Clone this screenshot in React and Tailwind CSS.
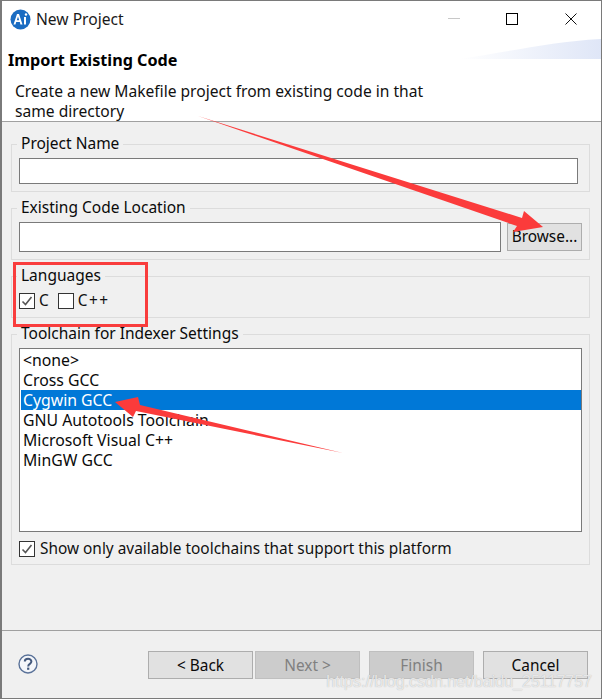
function Group({ label, className, children }) {
  return (
    <fieldset className={`border border-[#dcdcdc] mx-0 ${className}`}>
      <legend className="-ml-[2px] px-[4px] h-[20px] leading-[18px] text-[15.5px] text-[#0a0a0a]">{label}</legend>
      {children}
    </fieldset>
  );
}

function Check({ checked }) {
  return (
    <span className="w-[16px] h-[16px] shrink-0 border border-[#333] bg-white flex items-center justify-center">
      {checked && (
        <svg width="14" height="14" viewBox="0 0 14 14">
          <path d="M2.5 7.5 L5.5 10.5 L11.5 3" fill="none" stroke="#555" strokeWidth="1.6" />
        </svg>
      )}
    </span>
  );
}

function Btn({ children, disabled, className = '' }) {
  return (
    <button
      className={`h-[28px] w-[105px] border pt-px text-[15.4px] leading-[24px] ${
        disabled ? 'bg-[#cccccc] border-[#bfbfbf] text-[#808080]' : 'bg-[#e1e1e1] border-[#adadad] text-[#0a0a0a]'
      } ${className}`}
    >
      {children}
    </button>
  );
}

const items = ['<none>', 'Cross GCC', 'Cygwin GCC', 'GNU Autotools Toolchain', 'Microsoft Visual C++', 'MinGW GCC'];

export default function App() {
  return (
    <div className="relative w-[602px] h-[699px] overflow-hidden flex flex-col bg-[#f0f0f0] border-t border-b border-r border-l-2 border-[#7a7a7a] font-['Noto_Sans','Open_Sans',sans-serif]">
      {/* header */}
      <div className="relative h-[120px] bg-white border-b border-[#a0a0a0] box-content shrink-0">
        <svg className="absolute right-0 top-[37px]" width="142" height="21" viewBox="0 0 142 21">
          <defs>
            <linearGradient id="sw" x1="0" x2="1" y1="0" y2="0">
              <stop offset="0" stopColor="#ffffff" />
              <stop offset="1" stopColor="#dfe6f7" />
            </linearGradient>
          </defs>
          <path d="M0 21 C50 14 90 4 142 1 L142 21 Z" fill="url(#sw)" />
        </svg>
        <div className="relative flex items-center h-[37px] pl-[8px] pr-[24px]">
          <svg width="21" height="21" viewBox="0 0 21 21" className="shrink-0">
            <circle cx="10.5" cy="10.5" r="10" fill="#1a6cc2" />
            <path d="M3.5 15.5 L7 5 L9 5 L12.5 15.5 L10.4 15.5 L9.8 13 L6.2 13 L5.5 15.5 Z M6.8 11.2 L9.2 11.2 L8 7.4 Z" fill="#ffffff" fillRule="evenodd" />
            <rect x="14" y="8" width="2" height="7.5" fill="#ffffff" />
            <circle cx="16" cy="5.5" r="1.2" fill="#ffffff" />
          </svg>
          <span className="ml-[5px] text-[15.6px] text-[#1a1a1a]">New Project</span>
          <div className="ml-auto mb-[2px] flex items-center">
            <span className="w-[12px] h-px bg-[#c8c8c8]" />
            <span className="ml-[46px] w-[12px] h-[12px] border border-black" />
            <svg className="ml-[47px]" width="12" height="12" viewBox="0 0 12 12">
              <path d="M0.5 0.5 L11.5 11.5 M11.5 0.5 L0.5 11.5" stroke="#111" strokeWidth="1" />
            </svg>
          </div>
        </div>
        <h1 className="relative mt-[11px] ml-[6px] text-[16.2px] font-bold leading-[22px] text-black">Import Existing Code</h1>
        <p className="relative mt-[10px] ml-[13px] w-[430px] text-[15.6px] leading-[20px] text-[#111]">
          Create a new Makefile project from existing code in that same directory
        </p>
      </div>

      {/* groups */}
      <div className="flex-1 pl-[9px] pr-[11px] pt-[12px] flex flex-col">
        <Group label="Project Name" className="h-[58px] pl-[7px] pr-[11px] pt-[4px]">
          <div className="h-[26px] border border-[#7a7a7a] bg-white" />
        </Group>
        <Group label="Existing Code Location" className="mt-[6px] h-[62px] pl-[7px] pr-[7px] pt-[4px]">
          <div className="flex gap-[6px]">
            <div className="flex-1 h-[30px] border border-[#7a7a7a] bg-white" />
            <button className="w-[75px] h-[28px] mt-px border border-[#adadad] bg-[#e1e1e1] text-[15.4px] text-[#0a0a0a]">Browse...</button>
          </div>
        </Group>
        <Group label="Languages" className="mt-[6px] h-[52px] pl-[7px] pt-[6px]">
          <div className="flex items-center text-[15.4px] leading-[18px] text-[#111]">
            <Check checked />
            <span className="ml-[4px]">C</span>
            <span className="ml-[9px]"><Check /></span>
            <span className="ml-[4px] tracking-[1.5px]">C++</span>
          </div>
        </Group>
        <Group label="Toolchain for Indexer Settings" className="mt-[6px] h-[241px] pl-[7px] pr-[7px] pt-[4px]">
          <div className="h-[184px] border border-[#7a7a7a] bg-white pl-px pt-px">
            {items.map((t, i) => (
              <div
                key={t}
                className={`h-[20px] leading-[20px] text-[15.8px] pl-[2px] ${i === 2 ? 'bg-[#0078d7] text-white' : 'text-[#0a0a0a]'}`}
              >
                {t}
              </div>
            ))}
          </div>
          <label className="mt-[8px] flex items-center text-[15.4px] leading-[18px] text-[#111]">
            <Check checked />
            <span className="ml-[5px]">Show only available toolchains that support this platform</span>
          </label>
        </Group>
      </div>

      {/* footer */}
      <div className="shrink-0 h-[68px] border-t border-[#a0a0a0] flex items-start pt-[20px] pl-[16px] pr-[13px]">
        <svg width="20" height="20" viewBox="0 0 20 20" className="mt-[3px] shrink-0">
          <circle cx="10" cy="10" r="9" fill="#f4f6fa" stroke="#5a7299" strokeWidth="1.4" />
          <path d="M6.8 7.6 C6.8 3.9 13.4 3.9 13.4 7.6 C13.4 10 10.2 9.8 10.2 12.4" fill="none" stroke="#44597d" strokeWidth="2" />
          <rect x="9.1" y="13.6" width="2.2" height="2.2" fill="#44597d" />
        </svg>
        <div className="ml-auto flex">
          <Btn>&lt; Back</Btn>
          <Btn disabled className="ml-[2px]">Next &gt;</Btn>
          <Btn disabled className="ml-[9px]">Finish</Btn>
          <Btn className="ml-[9px]">Cancel</Btn>
        </div>
      </div>

      {/* red markup drawn over the dialog */}
      <svg className="absolute -left-[2px] -top-px pointer-events-none" width="602" height="699" viewBox="0 0 602 699">
        <rect x="14.5" y="263.5" width="132" height="62" fill="none" stroke="#f93d3d" strokeWidth="3" />
        <path d="M198 116 L522 218 L524 211 L543 227 L513 232 L517 226 Z" fill="#fb3b3b" />
        <path d="M343 453 L140 405 L138 397 L115 402 L133 417 L136 411 Z" fill="#fb3b3b" />
      </svg>

      <span className="absolute right-[9px] bottom-[6px] text-[16px] leading-[20px] text-white/70 [text-shadow:0_0_1px_#aaaaaa] font-['Liberation_Sans',sans-serif]">
        https://blog.csdn.net/baidu_25117757
      </span>
    </div>
  );
}
